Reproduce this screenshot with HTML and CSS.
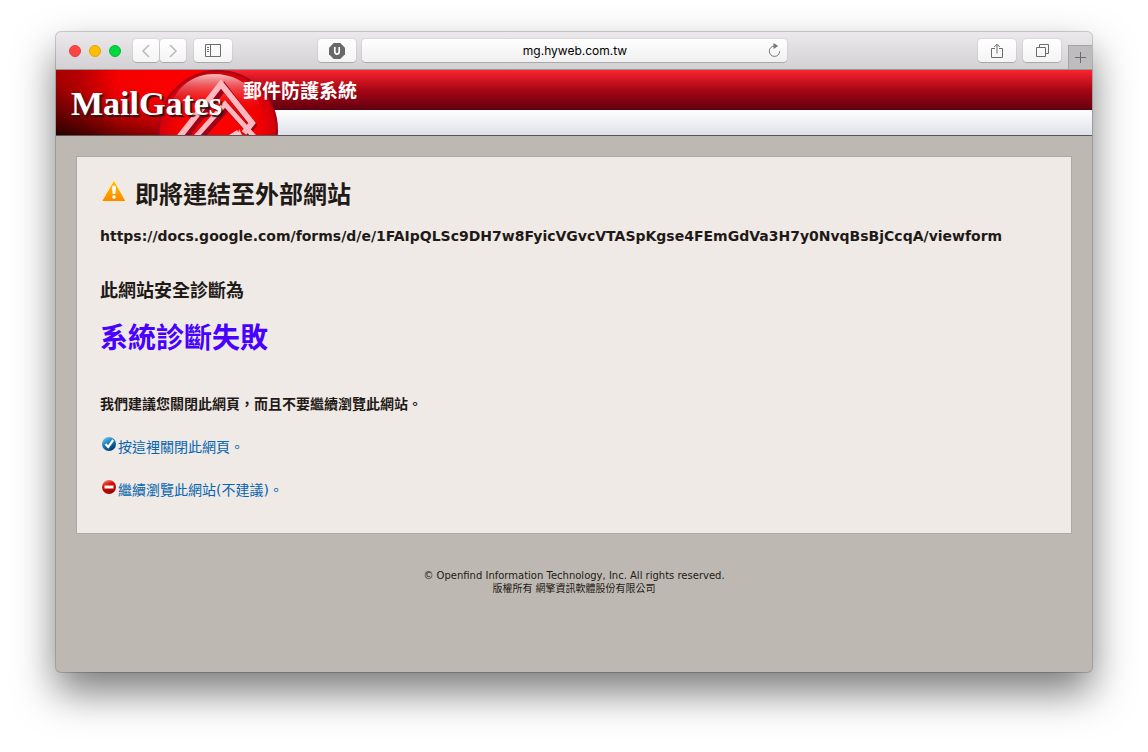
FILE: index.html
```html
<!DOCTYPE html>
<html lang="zh-Hant">
<head>
<meta charset="utf-8">
<meta name="viewport" content="width=device-width, initial-scale=1">
<title>MailGates 郵件防護系統</title>
<link rel="stylesheet" href="styles.css">
</head>
<body>
<div class="window">
  <div class="toolbar">
    <div class="tools">
      <div class="lights"><button class="light red" aria-label="Close"></button><button class="light yellow" aria-label="Minimize"></button><button class="light green" aria-label="Zoom"></button></div>
      <div class="nav">
        <button class="tool step" aria-label="Back"><svg width="10" height="14" viewBox="0 0 10 14"><path d="M8 1 2 7l6 6" fill="none" stroke="#b9b9b9" stroke-width="1.5"/></svg></button>
        <button class="tool step" aria-label="Forward"><svg width="10" height="14" viewBox="0 0 10 14"><path d="m2 1 6 6-6 6" fill="none" stroke="#b9b9b9" stroke-width="1.5"/></svg></button>
      </div>
      <button class="tool" aria-label="Sidebar"><svg width="16" height="13" viewBox="0 0 16 13"><path d="M.5.5h15v12H.5zM5.500.5v12M2 3.500h2M2 5.500h2M2 7.500h2" fill="none" stroke="#6c6c6c"/></svg></button>
      <button class="tool shield" aria-label="uBlock"><svg width="16" height="16" viewBox="0 0 16 16"><path d="M4.700 0h6.600L16 4.700v6.600L11.300 16H4.700L0 11.300V4.700z" fill="#686868"/><path d="M5.800 4v4.600a2.200 2.600 0 0 0 4.400 0V4" fill="none" stroke="#fff" stroke-width="1.700"/></svg></button>
    </div>
    <div class="address">
      <input class="url" type="text" aria-label="Address" value="mg.hyweb.com.tw">
      <button class="reload" aria-label="Reload"><svg width="13" height="15" viewBox="0 0 13 15"><path d="M6.500 3A5.200 5.200 0 1 0 11.700 8.200" fill="none" stroke="#777"/><path d="M5.500 0 10.200 3 5.500 6z" fill="#777"/></svg></button>
    </div>
    <div class="tools end">
      <button class="tool" aria-label="Share"><svg width="12" height="16" viewBox="0 0 12 16"><path d="M4 5.500H.5v9h11v-9H8M6 10.500V1.500M3.200 4 6 1.200 8.800 4" fill="none" stroke="#6c6c6c"/></svg></button>
      <button class="tool" aria-label="Show tabs"><svg width="13" height="13" viewBox="0 0 13 13"><path d="M.5 3.500h9v9h-9zM3.500 3V.5h9v9H10" fill="none" stroke="#6c6c6c"/></svg></button>
      <button class="newtab" aria-label="New tab"><svg width="11" height="11" viewBox="0 0 11 11"><path d="M5.500 0v11M0 5.500h11" stroke="#6a6a6d"/></svg></button>
    </div>
  </div>
  <header class="banner">
    <svg class="emblem" width="224" height="65" viewBox="0 0 224 65" aria-hidden="true">
      <defs>
        <linearGradient id="field"><stop offset="0" stop-color="#a00000"/><stop offset=".15" stop-color="#b50000"/><stop offset=".38" stop-color="#f60000"/><stop offset="1" stop-color="#f00"/></linearGradient>
        <linearGradient id="shade" x1="0" y1="1" x2=".5" y2=".2"><stop offset="0" stop-color="#200" stop-opacity=".95"/><stop offset=".5" stop-color="#500" stop-opacity=".4"/><stop offset="1" stop-color="#f00" stop-opacity="0"/></linearGradient>
        <radialGradient id="ball"><stop offset="0" stop-color="#f00"/><stop offset=".7" stop-color="#f40000"/><stop offset="1" stop-color="#d0000a"/></radialGradient>
        <linearGradient id="shine" x1="0" y1="0" x2="0" y2="1"><stop offset="0" stop-color="#fff" stop-opacity=".75"/><stop offset=".3" stop-color="#f3b0b4" stop-opacity=".5"/><stop offset="1" stop-color="#e00" stop-opacity="0"/></linearGradient>
      </defs>
      <path d="M0 0h162v65H0z" fill="url(#field)"/>
      <path d="M0 0h162v65H0z" fill="url(#shade)"/>
      <circle cx="162" cy="60" r="59" fill="url(#ball)" stroke="#a8001a" stroke-width="2"/>
      <path d="M114 38C120 16 138 4 158 4s38 10 46 30c-20 8-66 12-90 4z" fill="url(#shine)"/>
      <g fill="none">
        <path d="M124 73 168 17l29 38-7 9" stroke="#a00018" stroke-width="7"/>
        <path d="m140 73 32-36 30 35" stroke="#a00018" stroke-width="6"/>
        <path d="M121 70 165 14l31 39-8 10" stroke="#ffb8be" stroke-width="6"/>
        <path d="m137 70 32-36 32 36" stroke="#ffb8be" stroke-width="5"/>
      </g>
      <path d="m173 65 8-5 3 5zM183 59l3 6h-4z" fill="#ffc4c8"/>
    </svg>
    <span class="brand">MailGates</span>
    <span class="product">郵件防護系統</span>
  </header>
  <main class="panel">
    <h1 class="title"><svg class="warn" width="27" height="24" viewBox="0 0 27 24" aria-hidden="true"><defs><linearGradient id="amber" x1="0" y1="0" x2="0" y2="1"><stop offset="0" stop-color="#ffc400"/><stop offset="1" stop-color="#ff8500"/></linearGradient></defs><path d="M14 1 26 22.500H1.500z" fill="url(#amber)" stroke="#fff2c0" stroke-linejoin="round"/><path d="M12 8.500a2 2 0 0 1 4 0l-.7 6.500h-2.600z" fill="#fff"/><circle cx="14" cy="18" r="1.800" fill="#fff"/></svg>即將連結至外部網站</h1>
    <p class="target">https://docs.google.com/forms/d/e/1FAIpQLSc9DH7w8FyicVGvcVTASpKgse4FEmGdVa3H7y0NvqBsBjCcqA/viewform</p>
    <h2 class="label">此網站安全診斷為</h2>
    <p class="verdict">系統診斷失敗</p>
    <p class="advice">我們建議您關閉此網頁，而且不要繼續瀏覽此網站。</p>
    <a class="choice" href="#close"><svg width="18" height="16" viewBox="-1 1 18 16" aria-hidden="true"><defs><linearGradient id="blue" x1="0" y1="0" x2=".6" y2="1"><stop offset="0" stop-color="#86d4f2"/><stop offset=".5" stop-color="#1781bd"/><stop offset="1" stop-color="#003b70"/></linearGradient></defs><circle cx="8" cy="8" r="7" fill="url(#blue)"/><path d="m4.500 8 2.700 3 5-7" fill="none" stroke="#fff" stroke-width="2.200"/></svg>按這裡關閉此網頁。</a>
    <a class="choice" href="#continue"><svg width="18" height="16" viewBox="-1 1 18 16" aria-hidden="true"><defs><linearGradient id="stop" x1="0" y1="0" x2=".4" y2="1"><stop offset="0" stop-color="#f5a090"/><stop offset=".45" stop-color="#d51005"/><stop offset="1" stop-color="#a00000"/></linearGradient></defs><circle cx="8" cy="8" r="7" fill="url(#stop)"/><path d="M3.500 6.500h9v3h-9z" fill="#fff"/></svg>繼續瀏覽此網站(不建議)。</a>
  </main>
  <footer class="legal">© Openfind Information Technology, Inc. All rights reserved.<br>版權所有 網擎資訊軟體股份有限公司</footer>
</div>
</body>
</html>
```
FILE: styles.css
```css
* { box-sizing: border-box; }
body {
  margin: 0;
  padding: 32px 56px 80px;
  background: #fff;
  color: #1f1a17;
  font-family: "DejaVu Sans", "Noto Sans CJK TC", sans-serif;
}
h1, h2, p { margin: 0; }
button { padding: 0; border: 0; }
svg { display: block; flex: none; }
.window {
  display: flex;
  flex-direction: column;
  min-height: calc(100vh - 112px);
  overflow: hidden;
  border-radius: 5px;
  background: #bdb8b1;
  box-shadow: 0 0 0 1px rgba(0, 0, 0, .18), 0 20px 40px rgba(0, 0, 0, .52);
}
.toolbar {
  display: grid;
  grid-template-columns: 1fr minmax(0, 425px) 1fr;
  align-items: center;
  column-gap: 6px;
  height: 38px;
  border-bottom: 1px solid #98979b;
  background: linear-gradient(#ebe9eb, #d3d1d4);
}
.tools { display: flex; align-items: center; height: 37px; }
.end { justify-content: flex-end; gap: 7px; }
.lights { display: flex; gap: 8px; padding: 0 12px 0 13px; }
.light { width: 12px; height: 12px; border-radius: 50%; }
.red { background: #ff4543; border: 1px solid #e33e3d; }
.yellow { background: #ffbd00; border: 1px solid #e2a600; }
.green { background: #00d742; border: 1px solid #00bd35; }
.nav { display: flex; gap: 1px; margin-right: 8px; }
.tool {
  display: flex;
  align-items: center;
  justify-content: center;
  width: 38px;
  height: 23px;
  border-radius: 4px;
  background: linear-gradient(#fff, #f4f4f4);
  box-shadow: 0 0 1px 1px rgba(0, 0, 0, .06), 0 1px 0 rgba(0, 0, 0, .16);
}
.step { width: 26px; }
.shield { margin-left: auto; }
.address {
  display: flex;
  height: 23px;
  padding-right: 6px;
  border-radius: 4px;
  background: linear-gradient(#fff, #f0f0f0);
  box-shadow: 0 0 1px 1px rgba(0, 0, 0, .06), 0 1px 0 rgba(0, 0, 0, .16);
}
.url {
  flex: 1;
  min-width: 0;
  padding: 0 0 0 21px;
  border: 0;
  background: none;
  color: #000;
  font: 12px Inter, sans-serif;
  text-align: center;
}
.reload { display: flex; align-items: center; background: none; }
.newtab {
  display: flex;
  align-items: center;
  justify-content: center;
  align-self: flex-end;
  width: 24px;
  height: 24px;
  border-top: 1px solid #a5a3a6;
  border-left: 1px solid #a5a3a6;
  background: #bebcbf;
}
.banner {
  position: relative;
  height: 66px;
  border-bottom: 1px solid #55555a;
  background: linear-gradient(#fa2430, #a80614 50%, #600010) top / 100% 40px no-repeat, linear-gradient(#fff 40px, #dfe1e9);
}
.brand {
  position: absolute;
  left: 15px;
  top: 16px;
  color: #fff;
  font: bold 34px/36px "Liberation Serif", serif;
  text-shadow: 2px 2px 1px #26181a;
}
.product {
  position: absolute;
  left: 187px;
  top: 6px;
  color: #fff;
  font: bold 19px/28px "Noto Sans CJK TC", sans-serif;
}
.panel {
  display: flex;
  flex-direction: column;
  align-items: flex-start;
  margin: 20px 20px 0;
  padding: 20px 23px 33px;
  border: 1px solid #aaa9a8;
  background: #efeae6;
}
.title { display: flex; gap: 8px; font-size: 24px; line-height: 36px; }
.warn { margin-top: 2px; }
.target { margin-top: 11px; font-weight: bold; font-size: 14px; line-height: 24px; overflow-wrap: anywhere; }
.label { margin-top: 31px; font-size: 18px; line-height: 24px; }
.verdict { margin-top: 18px; color: #4800ff; font-weight: bold; font-size: 28px; line-height: 36px; }
.advice { margin-top: 37px; font-weight: bold; font-size: 14px; line-height: 20px; }
.choice { display: flex; margin-top: 23px; color: #0764ae; font-size: 14px; line-height: 20px; text-decoration: none; }
.legal { padding: 35px 20px 20px; font-size: 10px; line-height: 13px; text-align: center; }
```
